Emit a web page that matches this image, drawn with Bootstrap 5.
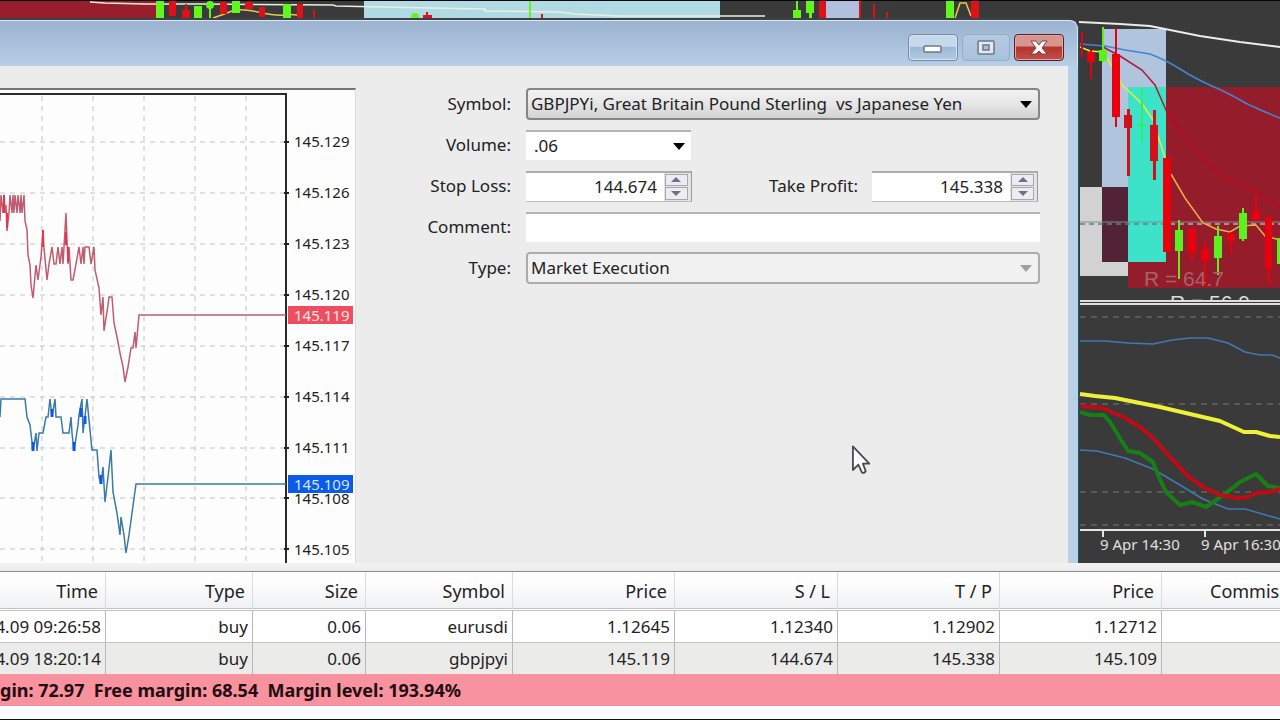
<!DOCTYPE html>
<html lang="en">
<head>
<meta charset="utf-8">
<meta name="viewport" content="width=device-width, initial-scale=1">
<title>Order</title>
<link href="https://cdn.jsdelivr.net/npm/bootstrap@5.3.0/dist/css/bootstrap.min.css" rel="stylesheet">
<style>
body{font-family:"Noto Sans","Open Sans",sans-serif;font-size:17px;line-height:24px;color:#222;background:#3a3a3a}
.desk{min-height:100vh}
.workspace{background:#3a3a3a;min-height:420px}
.backdrop{inset:0;width:100%;height:100%}
.tick-text{font-family:"Noto Sans",sans-serif;font-size:15px;fill:#222}
.order-win{margin:20px 201px 0 0;border-top:1px solid #dfe6ee;border-right:1px solid #1c5566;border-top-right-radius:9px;background:#b9d1e8}
.titlebar{height:45px;padding:13px 13px 0 0;gap:4px;background:linear-gradient(#9cb3d1,#b7cee6);border-top-right-radius:8px;border-right:1px solid #d3e4f2}
.win-btn{width:50px;height:27px;padding:0;border:1px solid #6f8cab;border-radius:4px;background:linear-gradient(#c6d8eb 45%,#9db8d5 50%,#b4cce4);box-shadow:inset 0 0 0 1px #d6e4f2}
.win-btn.faint{width:48px;border-color:#93acc8;box-shadow:none;background:linear-gradient(#b3cae1,#a9c2dc)}
.win-btn.shut{border-color:#5a2029;background:linear-gradient(#d8958f 42%,#b5342c 50%,#c2504a);box-shadow:inset 0 0 0 1px #e0a8a2}
.win-body{background:#ececec;margin-right:10px;padding-top:22px}
.tick-pane{flex:0 0 33.3333%;min-width:0;background:#fdfdfd;border-top:2px solid #747474;border-right:1px solid #ddd}
.fields{flex:1 1 0;min-width:0;padding-right:28px}
.fields-grid{display:grid;grid-template-columns:155px minmax(0,1fr);column-gap:15px;row-gap:9px;grid-auto-rows:32px;align-items:center}
.fields label{text-align:right;white-space:nowrap;line-height:24px}
.fields .form-select,.fields .form-control{font-size:17px;line-height:24px;height:30px;padding:0 6px;border-radius:0;border:0;border-top:2px solid #b4b4b4;color:#222;background-color:#fefefe;box-shadow:none}
.fields .form-select{background-repeat:no-repeat;background-size:12px 8px;background-position:right 6px center}
.fields .pick{height:32px;padding:0 3px;border:2px solid #868686;border-radius:4px;background-image:url("data:image/svg+xml,%3Csvg xmlns='http://www.w3.org/2000/svg' viewBox='0 0 12 8'%3E%3Cpath d='M0 1h12L6 8z' fill='%23000'/%3E%3C/svg%3E"),linear-gradient(#f2f2f2,#e6e6e6 50%,#d2d2d2);background-size:12px 8px,100% 100%;background-position:right 6px center,0 0}
.fields .pick.idle{border-color:#acacac;opacity:1;background-image:url("data:image/svg+xml,%3Csvg xmlns='http://www.w3.org/2000/svg' viewBox='0 0 12 8'%3E%3Cpath d='M0 1h12L6 8z' fill='%23a0a0a0'/%3E%3C/svg%3E"),linear-gradient(#f1f1f1,#f1f1f1)}
.fields .vol{width:165px;padding-left:8px;background-image:url("data:image/svg+xml,%3Csvg xmlns='http://www.w3.org/2000/svg' viewBox='0 0 12 8'%3E%3Cpath d='M0 1h12L6 8z' fill='%23000'/%3E%3C/svg%3E")}
.levels{padding-right:2px}
.take-label{margin-right:14px}
.spin{width:166px;height:31px;border-top:2px solid #acacac;border-right:1px solid #999;border-bottom:1px solid #bbb}
.fields .spin .form-control{height:28px;border:0;text-align:right;padding-right:7px}
.spin-keys{flex:0 0 27px;padding:1px 3px 1px 1px;gap:1px;background:#e4e4e4}
.spin-keys button{flex:1 1 0;padding:0;line-height:0;border:1px solid #a7a7ad;background:#ececf2;display:flex;align-items:center;justify-content:center}
.pointer{left:852px;top:423px}
.terminal{background:#fdfdfd;border-bottom:1px solid #111}
.splitter{height:8px;background:linear-gradient(#f3f3f3,#ebebeb)}
.table-clip{overflow:hidden;border-top:1px solid #8c8c8c}
.trades{margin:0 0 0 -8px;width:calc(100% + 8px);table-layout:fixed;border-collapse:separate;border-spacing:0;font-size:17px;color:#222}
.trades th{font-weight:400;font-size:18px;height:39px;padding:2px 7px 0 0;text-align:right;line-height:24px;vertical-align:middle;background:linear-gradient(#fefefe 20%,#f0f1f3);border:0;border-right:1px solid #dcdcdf;border-bottom:3px double #c2c2c2;white-space:nowrap}
.trades td{height:31px;padding:0 4px 0 0;text-align:right;line-height:24px;vertical-align:middle;background:#fefefe;border:0;border-right:1px solid #b8b8b8;white-space:nowrap}
.trades .first-row td{height:32px;border-bottom:1px solid #c4c4c4}
.trades .alt-row td{background:#ebebea}
.trades th.open-end{text-align:left;padding:2px 0 0 48px;border-right:0}
.trades td:last-child{border-right:0}
.summary{height:32px;background:#f7929e;color:#220c12;font-size:18px;font-weight:700;line-height:32px;white-space:pre;margin-bottom:13px;overflow:hidden}
</style>
</head>
<body>
<div class="desk d-flex flex-column overflow-hidden">
<main class="workspace position-relative d-flex flex-column flex-grow-1">
<svg class="backdrop position-absolute" viewBox="0 0 1280 563" preserveAspectRatio="xMaxYMin slice" aria-hidden="true">
<defs><clipPath id="cut"><rect x="1080" y="280" width="200" height="20"/></clipPath></defs>
<rect width="1280" height="563" fill="#3a3a3a"/>
<!-- strip above the window -->
<rect width="157" height="20" fill="#991e2c"/>
<rect x="364" width="356" height="20" fill="#b0dbe5"/>
<rect x="824" width="36" height="20" fill="#b0c0de"/>
<path d="M90 2L105 3L145 4H200L333 5L336 6L430 8L485 9V11L560 12L575 14L618 16H765" fill="none" stroke="#eeeedd" stroke-width="1.5"/>
<path d="M213 18Q225 14 232 11T258 12T284 15T297 15M955 18L960 3L966 3L971 16" fill="none" stroke="#e6c850" stroke-width="1.5"/>
<g fill="#62f51e"><rect x="156" width="8" height="19"/><rect x="194" y="6" width="8" height="12"/><circle cx="210" cy="5" r="4"/><rect x="209" y="2" width="2" height="16"/><rect x="232" width="8" height="13"/><rect x="283" y="4" width="8" height="14"/><rect x="529" width="2" height="19"/><rect x="793" y="10" width="8" height="9"/><rect x="796" width="2" height="19"/><rect x="806" width="8" height="13"/><rect x="809" width="3" height="19"/><rect x="946" width="8" height="18"/><circle cx="415" cy="17" r="4"/></g>
<g fill="#e01018"><rect x="169" y="1" width="7" height="15"/><rect x="182" y="10" width="8" height="9"/><rect x="185" y="4" width="2" height="14"/><rect x="220" y="2" width="7" height="12"/><rect x="245" y="2" width="8" height="7"/><rect x="259" y="7" width="6" height="10"/><rect x="297" y="4" width="6" height="14"/><rect x="313" y="10" width="2" height="8"/><rect x="423" y="15" width="9" height="5"/><rect x="426" y="12" width="2" height="8"/><rect x="541" y="14" width="2" height="5"/><rect x="819" width="7" height="19"/><rect x="859" width="2" height="19"/><rect x="873" y="4" width="2" height="14"/><rect x="886" y="12" width="2" height="7"/><rect x="971" width="8" height="18"/></g>
<rect width="1280" height="1" fill="#050505"/>
<rect y="18" width="1070" height="2" fill="#3c4148"/>
<!-- price zones -->
<rect x="1102" y="29" width="64" height="158" fill="#b0c4de"/>
<path d="M1080 187H1102V262H1128V276H1080Z" fill="#d2d2d2"/>
<rect x="1102" y="187" width="26" height="75" fill="#522336"/>
<rect x="1128" y="87" width="38" height="175" fill="#3de3c8"/>
<path d="M1166 87H1280V288H1128V262H1166Z" fill="#951c2b"/>
<path d="M1080 222H1280" stroke="#7d8d92"/>
<path d="M1080 224H1280" stroke="#d6f5ee" stroke-dasharray="5 4"/>
<path d="M1080 224H1166" stroke="#1c4c4c" stroke-dasharray="5 4"/>
<path d="M1079 22L1120 24L1150 26L1165 29L1200 36L1240 42L1280 47" fill="none" stroke="#ececec" stroke-width="2"/>
<path d="M1080 44L1105 46L1125 50L1150 54Q1166 60 1180 69T1212 86T1240 100T1280 118" fill="none" stroke="#4583cf" stroke-width="1.5"/>
<path d="M1103 47L1120 56L1142 70L1155 85L1166 110" fill="none" stroke="#a81c3a" stroke-width="1.5"/>
<path d="M1166 110Q1185 138 1206 161T1255 190L1280 207" fill="none" stroke="#b80a22" stroke-width="2"/>
<path d="M1080 47L1090 51L1103 52L1112 66L1123 86L1132 94L1143 105L1153 120L1165 158" fill="none" stroke="#e4ee3e" stroke-width="1.5"/>
<path d="M1171 174L1185 198L1203 223L1216 229L1230 232L1240 226L1256 225L1265 236L1280 240" fill="none" stroke="#e8b048" stroke-width="1.5"/>
<g fill="#e8000c"><rect x="1081" y="32" width="2" height="25"/><rect x="1087" y="52" width="8" height="10"/><rect x="1090" y="50" width="2" height="29"/><rect x="1112" y="54" width="8" height="63"/><rect x="1115" y="28" width="2" height="99"/><rect x="1163" y="158" width="8" height="94"/><rect x="1188" y="229" width="8" height="24"/><rect x="1191" y="229" width="2" height="32"/><rect x="1201" y="249" width="8" height="12"/><rect x="1204" y="242" width="2" height="45"/><rect x="1227" y="234" width="8" height="7"/><rect x="1230" y="232" width="2" height="22"/><rect x="1252" y="211" width="8" height="9"/><rect x="1255" y="194" width="2" height="26"/><rect x="1265" y="217" width="7" height="52"/><rect x="1268" y="217" width="2" height="66"/></g>
<g fill="#d2101c"><rect x="1124" y="115" width="8" height="13"/><rect x="1127" y="109" width="3" height="67"/><rect x="1150" y="125" width="8" height="36"/><rect x="1153" y="110" width="3" height="70"/></g>
<g fill="#5cf01e"><rect x="1099" y="50" width="8" height="11"/><rect x="1102" y="27" width="2" height="35"/><rect x="1175" y="230" width="8" height="21"/><rect x="1178" y="220" width="2" height="59"/><rect x="1214" y="236" width="8" height="22"/><rect x="1217" y="226" width="2" height="49"/><rect x="1239" y="213" width="8" height="26"/><rect x="1242" y="208" width="2" height="33"/><rect x="1277" y="238" width="3" height="26"/></g>
<path d="M1142 88V142M1138 125H1146" stroke="#2ef060" stroke-width="2"/>
<g font-family="Liberation Sans, Arial, sans-serif" font-size="21"><text x="1144" y="286" fill="#a5646a">R = 64.7</text><text x="1170" y="310" fill="#dedede" clip-path="url(#cut)">R = 56.9</text></g>
<path d="M1080 301H1280M1080 304H1280" stroke="#dedede" stroke-width="2"/>
<!-- oscillator -->
<path d="M1080 317H1280M1080 404H1280M1080 492H1280M1080 525H1280" stroke="#777" stroke-dasharray="6 5" fill="none"/>
<g fill="none" stroke-linejoin="round">
<path d="M1080 341H1105L1128 343L1153 344L1172 340L1190 338H1208L1228 343L1245 352L1260 355H1272L1280 358M1080 450L1097 451L1125 458L1153 469L1180 485L1203 499L1228 509H1245L1280 519" stroke="#4079b4" stroke-width="1.5"/>
<path d="M1080 394L1095 396L1115 398L1135 402L1160 407L1190 414L1220 421L1244 432H1256L1270 436L1280 437" stroke="#eef03a" stroke-width="4"/>
<path d="M1080 412L1090 415H1104L1110 422L1128 451L1140 453L1153 462L1158 475L1166 492L1180 505L1192 502L1206 507L1225 494L1240 482L1256 474L1268 486L1280 488" stroke="#168016" stroke-width="4"/>
<path d="M1080 406L1103 408L1125 418L1140 427L1153 438L1170 457L1190 478L1205 488L1220 495L1238 498L1248 497L1256 493L1270 492L1280 489" stroke="#c00a14" stroke-width="4"/>
<path d="M1080 530H1280M1103 530V537M1205 530V537" stroke="#e6e6e6" stroke-width="2"/></g>
<g font-family="Noto Sans, sans-serif" font-size="15" fill="#e0e0e0"><text x="1100" y="550">9 Apr 14:30</text><text x="1201" y="550">9 Apr 16:30</text></g>
</svg>

<section class="order-win position-relative d-flex flex-column flex-grow-1" aria-label="Order">
<header class="titlebar d-flex justify-content-end align-items-start">
<button type="button" class="win-btn btn d-flex justify-content-center align-items-center" aria-label="Minimize"><svg width="20" height="10" viewBox="0 0 20 10"><rect x="1" y="3" width="17" height="6" rx="1" fill="#fff" stroke="#6c7887" stroke-width="1.5"/></svg></button>
<button type="button" class="win-btn faint btn d-flex justify-content-center align-items-center" aria-label="Maximize"><svg width="18" height="16" viewBox="0 0 18 16"><rect x="1" y="1" width="16" height="13" rx="1" fill="#e4e9ee" stroke="#6c7887" stroke-width="1.5"/><rect x="6" y="5" width="6" height="5" fill="#a9c0d8" stroke="#6c7887" stroke-width="1.5"/></svg></button>
<button type="button" class="win-btn shut btn d-flex justify-content-center align-items-center" aria-label="Close"><svg width="20" height="16" viewBox="0 0 20 16"><path d="M2 1H7L10 5L13 1H18L13 8L18 14H13L10 11L7 14H2L7 8Z" fill="#fff" stroke="#71434a" stroke-width="1"/></svg></button>
</header>
<div class="win-body d-flex flex-grow-1">
<div class="tick-pane position-relative overflow-hidden">
<svg class="position-absolute top-0 start-0 w-100 h-100" viewBox="0 90 355 473" preserveAspectRatio="xMinYMin slice" role="img" aria-label="Tick chart">
<path d="M42 96V563M93 96V563M144 96V563M195 96V563M246 96V563M0 142H286M0 193H286M0 244H286M0 295H286M0 346H286M0 397H286M0 448H286M0 498H286M0 549H286" stroke="#c4c4c4" stroke-width="1" stroke-dasharray="5 5" fill="none"/>
<path d="M0 94H286V563" fill="none" stroke="#2a2a2a" stroke-width="2"/>
<path d="M284 142H289M284 193H289M284 244H289M284 295H289M284 346H289M284 397H289M284 448H289M284 498H289M284 549H289" stroke="#222" stroke-width="2"/>
<path d="M0 221L1 195L3 213L4 195L5 213L6 205L7 231L9 213L10 195L12 213L13 195L14 213L15 195L17 213L18 195L20 213L21 195L22 213L24 195L25 221L27 230L28 255L30 265L31 285L33 298L36 265L38 280L41 257L43 230L44 248L47 280L49 264L52 247L54 264H56L58 247L60 264L62 247L63 264L66 213L67 240L68 264L69 247L71 280H73L76 264L79 247L81 264L83 247L84 264L85 247H89L91 264L94 247L95 270L99 288L101 315L103 297L104 331L108 305L109 297H112L114 323L117 337L120 353L123 367L125 382L128 367L131 348H133L135 332L136 348L139 315H286" fill="none" stroke="#c05c72" stroke-width="1.5"/>
<path d="M4 195V213M7 213V228M43 230V247M66 232V245M68 247V262" stroke="#ee3348" stroke-width="2"/>
<path d="M0 417L1 399H25L27 417L30 425L32 442L33 451L36 433L37 451L39 433H43L46 417H48L50 399L52 417L55 399L56 417H61L63 433H69L71 417L72 433L74 451L78 425L79 415L82 399L83 433L87 399L89 420L92 450H97L99 477L101 484L103 467L105 502L108 477L111 450L113 492L117 513L120 535L121 517L124 535L126 553L129 535L132 513L136 484H286" fill="none" stroke="#3a7aa6" stroke-width="1.5"/>
<path d="M33 442V451M52 409V417M74 442V451M81 408V417M85 416V424M101 475V484" stroke="#0b57e6" stroke-width="3"/>
<rect x="288" y="306" width="65" height="18" fill="#ee4f60"/>
<g class="tick-text"><text x="294" y="147">145.129</text><text x="294" y="198">145.126</text><text x="294" y="249">145.123</text><text x="294" y="300">145.120</text><text x="294" y="321" style="fill:#ffe3e6">145.119</text><text x="294" y="351">145.117</text><text x="294" y="402">145.114</text><text x="294" y="453">145.111</text><text x="294" y="504">145.108</text><text x="294" y="555">145.105</text></g>
<rect x="288" y="475" width="65" height="18" fill="#0b5ae8"/>
<text class="tick-text" x="294" y="490" style="fill:#cfe6ff">145.109</text>
</svg>
</div>
<form class="fields">
<div class="fields-grid">
<label for="symbol">Symbol:</label>
<select id="symbol" class="form-select pick"><option>GBPJPYi, Great Britain Pound Sterling&nbsp; vs Japanese Yen</option></select>
<label for="volume">Volume:</label>
<select id="volume" class="form-select vol"><option>.06</option></select>
<label for="sl">Stop Loss:</label>
<div class="levels d-flex justify-content-between align-items-center">
<div class="spin d-flex"><input id="sl" class="form-control" type="text" value="144.674"><div class="spin-keys d-flex flex-column"><button type="button" aria-label="Raise stop loss"><svg width="10" height="5" viewBox="0 0 10 5"><path d="M0 5L5 0L10 5Z" fill="#70708a"/></svg></button><button type="button" aria-label="Lower stop loss"><svg width="10" height="5" viewBox="0 0 10 5"><path d="M0 0H10L5 5Z" fill="#70708a"/></svg></button></div></div>
<div class="d-flex align-items-center"><label for="tp" class="take-label">Take Profit:</label>
<div class="spin d-flex"><input id="tp" class="form-control" type="text" value="145.338"><div class="spin-keys d-flex flex-column"><button type="button" aria-label="Raise take profit"><svg width="10" height="5" viewBox="0 0 10 5"><path d="M0 5L5 0L10 5Z" fill="#70708a"/></svg></button><button type="button" aria-label="Lower take profit"><svg width="10" height="5" viewBox="0 0 10 5"><path d="M0 0H10L5 5Z" fill="#70708a"/></svg></button></div></div></div>
</div>
<label for="comment">Comment:</label>
<input id="comment" class="form-control" type="text">
<label for="kind">Type:</label>
<select id="kind" class="form-select pick idle" disabled><option>Market Execution</option></select>
</div>
</form>
</div>
<svg class="pointer position-absolute" width="20" height="32" viewBox="0 0 22 32" aria-hidden="true"><path d="M1 1V27L7 21L11 30Q14 31 15 28L12 20H19Z" fill="#fff" stroke="#4a4a52" stroke-width="2" stroke-linejoin="round"/></svg>
</section>
</main>

<section class="terminal" aria-label="Terminal">
<div class="splitter"></div>
<div class="table-clip">
<table class="trades">
<colgroup><col style="width:114px"><col style="width:147px"><col style="width:113px"><col style="width:147px"><col style="width:162px"><col style="width:163px"><col style="width:162px"><col style="width:162px"><col></colgroup>
<thead><tr><th>Time</th><th>Type</th><th>Size</th><th>Symbol</th><th>Price</th><th>S / L</th><th>T / P</th><th>Price</th><th class="open-end">Commis</th></tr></thead>
<tbody>
<tr class="first-row"><td>4.09 09:26:58</td><td>buy</td><td>0.06</td><td>eurusdi</td><td>1.12645</td><td>1.12340</td><td>1.12902</td><td>1.12712</td><td></td></tr>
<tr class="alt-row"><td>4.09 18:20:14</td><td>buy</td><td>0.06</td><td>gbpjpyi</td><td>145.119</td><td>144.674</td><td>145.338</td><td>145.109</td><td></td></tr>
</tbody>
</table>
</div>
<div class="summary">gin: 72.97  Free margin: 68.54  Margin level: 193.94%</div>
</section>
</div>
<script src="https://cdn.jsdelivr.net/npm/bootstrap@5.3.0/dist/js/bootstrap.bundle.min.js"></script>
</body>
</html>
